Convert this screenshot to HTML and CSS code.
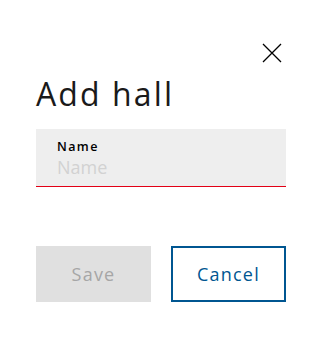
FILE: index.html
```html
<!DOCTYPE html>
<html>
<head>
<meta charset="utf-8">
<link rel="stylesheet" href="styles.css">
</head>
<body>
<div class="dialog">
  <div class="top">
    <button class="close" aria-label="Close">
      <svg width="20" height="20" viewBox="0 0 20 20"><path d="M1 1 L19 19 M19 1 L1 19" stroke="#000" stroke-width="1.3" fill="none"/></svg>
    </button>
  </div>
  <h1 class="title">Add hall</h1>
  <div class="field">
    <label class="label">Name</label>
    <input class="input" placeholder="Name">
  </div>
  <div class="actions">
    <button class="btn save" disabled>Save</button>
    <button class="btn cancel">Cancel</button>
  </div>
</div>
</body>
</html>
```
FILE: styles.css
```css
html, body { margin: 0; padding: 0; background: #fff; }
body { font-family: "Open Sans", "Noto Sans", sans-serif; color: #000; }
.dialog { width: 250px; padding: 43px 35px 0 36px; }
.top { display: flex; justify-content: flex-end; height: 20px; padding-right: 4px; }
.close { border: 0; background: none; padding: 0; width: 20px; height: 20px; cursor: pointer; }
.close svg { display: block; }
.title { margin: 11px 0 0; font-size: 32px; font-weight: 400; line-height: 40px; color: #1a1a1a; letter-spacing: 2.1px; }
.field { margin-top: 15px; background: #eeeeee; border-bottom: 1px solid #e20015; height: 58px; padding: 10px 20px 0 21px; box-sizing: border-box; display: flex; flex-direction: column; }
.label { font-size: 12.5px; font-weight: 600; line-height: 16px; color: #000; letter-spacing: 1.4px; margin-bottom: 2px; }
.input { border: 0; background: transparent; padding: 0; margin: 0; font-family: inherit; font-size: 18px; line-height: 20px; height: 20px; outline: none; }
.input::placeholder { color: #d2d2d2; }
.actions { display: flex; gap: 20px; margin-top: 59px; }
.btn { width: 115px; height: 56px; font-family: inherit; font-size: 18px; box-sizing: border-box; letter-spacing: 1.2px; padding: 0; }
.save { background: #e0e0e0; border: 0; color: #a6a6a6; }
.cancel { background: #fff; border: 2px solid #005691; color: #005691; }
```
